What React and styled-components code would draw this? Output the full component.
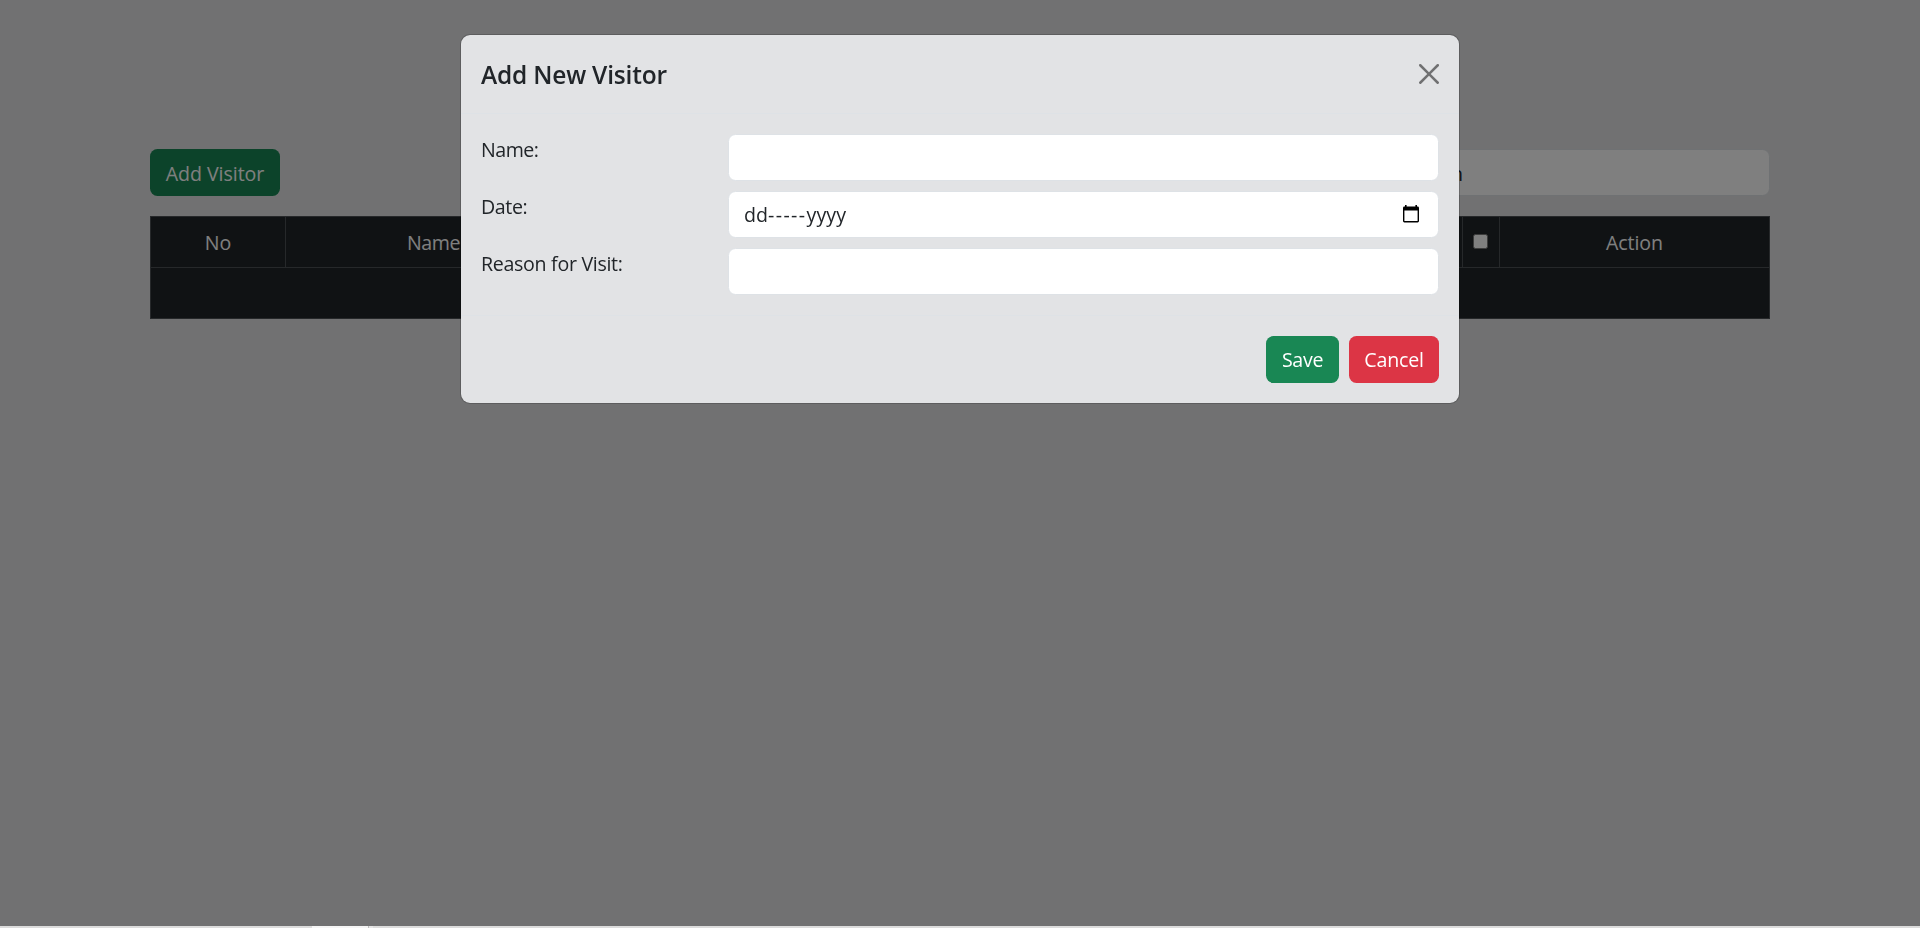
import React from "react";
import styled, { createGlobalStyle } from "styled-components";

const Global = createGlobalStyle`
  * { box-sizing: border-box; }
  body {
    margin: 0;
    background: #e2e3e5;
    color: #212529;
    font-family: "Open Sans", "Noto Sans", sans-serif;
    font-size: 19.6px;
    line-height: 30px;
    overflow: hidden;
  }
`;

const Page = styled.div`
  display: flex;
  flex-direction: column;
  height: 928px;
`;

const Content = styled.main`
  flex: 1;
  padding: 149px 150px 0;
`;

const Toolbar = styled.div`
  display: flex;
  justify-content: space-between;
  height: 67px;
`;

const Text = styled.span`
  letter-spacing: ${(p) => p.$track || 0}px;
  white-space: pre;
`;

const Button = styled.button`
  width: ${(p) => p.$width}px;
  height: 47px;
  padding: ${(p) => p.$drop || 0}px 0 0;
  border: 0;
  border-radius: 7.5px;
  background: ${(p) => (p.$danger ? "#dc3545" : "#198754")};
  color: #fff;
  font: inherit;
  line-height: 30px;
  text-align: center;
`;

const Field = styled.div`
  display: flex;
  align-items: center;
  justify-content: space-between;
  width: ${(p) => p.$width}px;
  height: 47px;
  padding: ${(p) => p.$drop || 0}px 17px 0 15px;
  border: 1px solid #dee2e6;
  border-radius: 7.5px;
  background: #fff;
`;

const Table = styled.table`
  width: 1620px;
  table-layout: fixed;
  border-collapse: collapse;
  background: #212529;
  color: #fff;
  text-align: center;
`;

const Cell = styled.th`
  width: ${(p) => p.$width}px;
  height: 51px;
  padding: 1px 0 0;
  border: 1px solid #4d5154;
  font-weight: 400;
`;

const CheckBox = styled.span`
  display: block;
  width: 15px;
  height: 15px;
  margin: -3px 0 0 10px;
  border: 1px solid #767676;
  border-radius: 2.5px;
  background: #fff;
`;

const Taskbar = styled.footer`
  position: relative;
  z-index: 2;
  display: flex;
  height: 2px;
  padding-left: 312px;
  background: #dcdcdc;
`;

const ActiveTask = styled.div`
  width: 56px;
  background: #f5f5f5;
`;

const TaskEdge = styled.div`
  width: 5px;
  border-left: 1px solid #bdbdbd;
  background: #e6e6e6;
`;

const Backdrop = styled.div`
  position: fixed;
  inset: 0;
  z-index: 1;
  padding-top: 34px;
  background: rgba(0, 0, 0, 0.5);
`;

const Dialog = styled.section`
  width: 1000px;
  height: 370px;
  margin: 0 auto;
  border: 1px solid rgba(0, 0, 0, 0.175);
  border-radius: 10px;
  background: #e2e3e5;
  background-clip: padding-box;
`;

const Header = styled.header`
  display: flex;
  align-items: center;
  justify-content: space-between;
  height: 79px;
  padding: 0 20px;
  border-bottom: 1px solid #dee2e6;
`;

const Title = styled.h5`
  margin: 1px 0 0;
  font-size: 24.5px;
  font-weight: 600;
  line-height: 37px;
`;

const Form = styled.div`
  display: flex;
  flex-direction: column;
  gap: 10px;
  padding: 20px;
`;

const FormRow = styled.div`
  display: flex;
  justify-content: space-between;
`;

const Label = styled.div`
  padding-top: 1px;
`;

const Footer = styled.footer`
  display: flex;
  justify-content: flex-end;
  gap: 10px;
  padding: 20px 20px 0;
  border-top: 1px solid #dee2e6;
`;

const CloseIcon = () => (
  <svg width="20" height="20" viewBox="0 0 16 16" opacity="0.5">
    <path d="M.293.293a1 1 0 0 1 1.414 0L8 6.586 14.293.293a1 1 0 1 1 1.414 1.414L9.414 8l6.293 6.293a1 1 0 0 1-1.414 1.414L8 9.414l-6.293 6.293a1 1 0 0 1-1.414-1.414L6.586 8 .293 1.707a1 1 0 0 1 0-1.414z" />
  </svg>
);

const CalendarIcon = () => (
  <svg width="20" height="22" viewBox="0 0 20 22">
    <path d="M4 1h1.600v1.600H14.400V1H16v1.600h.6Q18 2.600 18 4V17Q18 18.400 16.600 18.400H3.400Q2 18.400 2 17V4Q2 2.600 3.400 2.600H4zM3.400 6.600V17H16.600V6.600z" />
  </svg>
);

const DateValue = () => (
  <span>
    <Text>dd</Text>
    <Text $track={1.4}>-----</Text>
    <Text $track={0.1}>yyyy</Text>
  </span>
);

const FIELDS = [
  { label: "Name:", track: -0.5 },
  { label: "Date:", track: -0.4, date: true },
  { label: "Reason for Visit:", track: -0.3 },
];

export default function App() {
  return (
    <>
      <Global />
      <Page>
        <Content>
          <Toolbar>
            <Button $width={130} $drop={2}>
              <Text $track={-0.05}>Add Visitor</Text>
            </Button>
            <Field $width={385} $drop={2}>
              <Text>Search</Text>
            </Field>
          </Toolbar>
          <Table>
            <thead>
              <tr>
                <Cell $width={135}><Text>No</Text></Cell>
                <Cell $width={296}><Text $track={-0.4}>Name</Text></Cell>
                <Cell $width={296}><Text>Date</Text></Cell>
                <Cell><Text>Reason</Text></Cell>
                <Cell $width={37}><CheckBox /></Cell>
                <Cell $width={270}><Text $track={-0.1}>Action</Text></Cell>
              </tr>
            </thead>
            <tbody>
              <tr>
                <Cell as="td" colSpan={6} />
              </tr>
            </tbody>
          </Table>
        </Content>
        <Taskbar>
          <ActiveTask />
          <TaskEdge />
        </Taskbar>
      </Page>
      <Backdrop>
        <Dialog>
          <Header>
            <Title><Text $track={-0.2}>Add New Visitor</Text></Title>
            <CloseIcon />
          </Header>
          <Form>
            {FIELDS.map((field) => (
              <FormRow key={field.label}>
                <Label><Text $track={field.track}>{field.label}</Text></Label>
                <Field $width={711}>
                  {field.date && <DateValue />}
                  {field.date && <CalendarIcon />}
                </Field>
              </FormRow>
            ))}
          </Form>
          <Footer>
            <Button $width={73}><Text $track={-0.3}>Save</Text></Button>
            <Button $width={90} $danger><Text $track={-0.2}>Cancel</Text></Button>
          </Footer>
        </Dialog>
      </Backdrop>
    </>
  );
}
